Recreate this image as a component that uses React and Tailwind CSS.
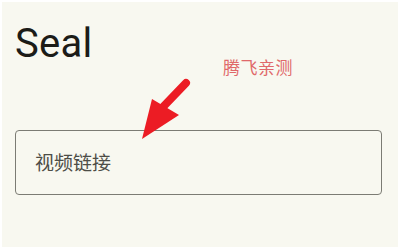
export default function App() {
  return (
    <div className="relative w-[400px] h-[249px] bg-[#f8f8f0] border-2 border-white overflow-hidden font-['Roboto','Noto_Sans_CJK_SC',sans-serif]">
      <div className="px-[13px] pt-[17px]">
        <h1 className="text-[40px] leading-[50px] text-[#1c1c18] font-normal tracking-[0.3px]">Seal</h1>
        <div className="mt-[61px] h-[65px] rounded-[4px] border-[1.5px] border-[#7c7c74] flex items-center pl-[19px] mr-[3px]">
          <span className="text-[19px] text-[#4d4d47] font-['Noto_Sans_CJK_SC',sans-serif]">视频链接</span>
        </div>
      </div>

      {/* annotation overlay */}
      <span className="absolute left-[221px] top-[52px] text-[17px] text-[#e0686a] tracking-[0.5px] font-['Noto_Sans_CJK_SC',sans-serif]">
        腾飞亲测
      </span>
      <svg className="absolute left-0 top-0" width="400" height="249" viewBox="0 0 400 249">
        <line x1="184" y1="81" x2="160" y2="106" stroke="#ec1c24" strokeWidth="8" strokeLinecap="round" />
        <polygon points="140,137 150,97 177,113" fill="#ec1c24" />
      </svg>
    </div>
  );
}
